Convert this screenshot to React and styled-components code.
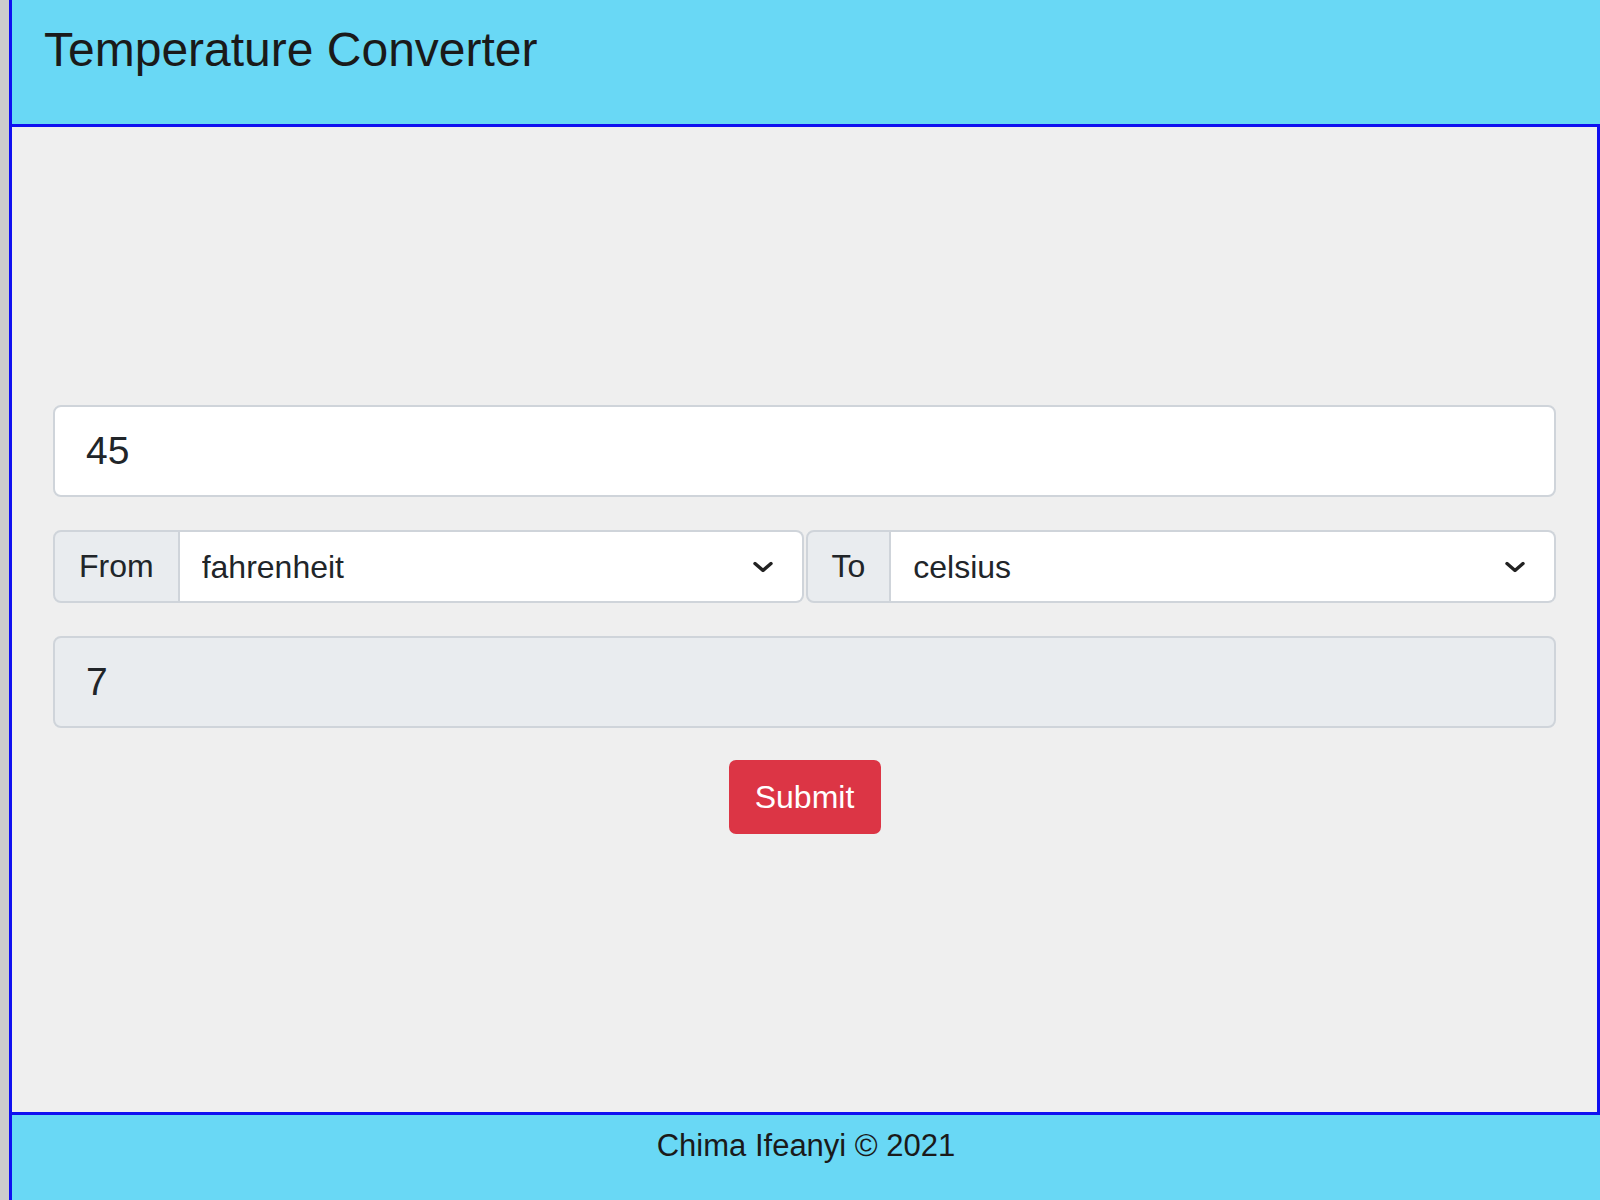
import styled, { createGlobalStyle } from 'styled-components';

const GlobalStyle = createGlobalStyle`
    html, body {
        margin: 0;
        padding: 0;
        background: #cdcdcd;
    }

    #root {
        padding-left: 9px;
    }
`

const Chevron = () => (
    <ChevronIcon viewBox="0 0 20 11" width="20" height="11">
        <polyline points="2,2 10,9 18,2" fill="none" stroke="#222" strokeWidth="3.4" strokeLinecap="round" strokeLinejoin="round" />
    </ChevronIcon>
);

const UnitSelect = ({ label, value, options }) => (
    <InputGroup>
        <GroupLabel>{label}</GroupLabel>
        <SelectBox>
            <Select defaultValue={value}>
                {options.map((o) => <option key={o} value={o}>{o}</option>)}
            </Select>
            <Chevron />
        </SelectBox>
    </InputGroup>
);

const App = () => {
    const units = ['celsius', 'fahrenheit', 'kelvin'];

    return (
        <>
            <GlobalStyle />
            <Page>
                <Header>
                    <Title>Temperature Converter</Title>
                </Header>
                <Main>
                    <Form onSubmit={(e) => e.preventDefault()}>
                        <TextInput type="text" defaultValue="45" />
                        <SelectRow>
                            <UnitSelect label="From" value="fahrenheit" options={units} />
                            <UnitSelect label="To" value="celsius" options={units} />
                        </SelectRow>
                        <TextInput type="text" value="7" readOnly $readonly />
                        <SubmitButton type="submit">Submit</SubmitButton>
                    </Form>
                </Main>
                <Footer>Chima Ifeanyi © 2021</Footer>
            </Page>
        </>
    );
}

const Page = styled.div`
    display: flex;
    flex-direction: column;
    height: 1200px;
    border-left: 3px solid #1010f0;
    font-family: "Liberation Sans", Arial, sans-serif;
    color: #212529;
`

const Header = styled.header`
    height: 103px;
    padding: 21px 0 0 32px;
    background: #69d8f5;
    border-bottom: 3px solid #1010f0;
`

const Title = styled.h1`
    margin: 0;
    font-size: 48px;
    font-weight: 400;
    line-height: 1.2;
    color: #1a1a1a;
`

const Main = styled.main`
    flex: 1;
    display: flex;
    flex-direction: column;
    justify-content: center;
    padding: 0 41px;
    background: #efefef;
    border-right: 3px solid #1010f0;
`

const Form = styled.form`
    display: flex;
    flex-direction: column;
    gap: 33px;
`

const TextInput = styled.input`
    box-sizing: border-box;
    height: 92px;
    width: 100%;
    padding: 0 31px;
    font-family: inherit;
    font-size: 39px;
    color: #212529;
    background: ${(props) => props.$readonly ? '#e9ecef' : '#fff'};
    border: 2px solid #cfd4da;
    border-radius: 8px;
    outline: none;
`

const SelectRow = styled.div`
    display: grid;
    grid-template-columns: 1fr 1fr;
    gap: 2px;
`

const InputGroup = styled.div`
    display: flex;
    height: 73px;
`

const GroupLabel = styled.span`
    display: flex;
    align-items: center;
    padding: 0 24px;
    font-size: 32px;
    background: #e9ecef;
    border: 2px solid #cfd4da;
    border-radius: 8px 0 0 8px;
`

const SelectBox = styled.div`
    position: relative;
    flex: 1;
    display: flex;
`

const Select = styled.select`
    flex: 1;
    appearance: none;
    padding: 0 22px;
    font-family: "Liberation Sans", Arial, sans-serif;
    font-size: 32px;
    color: #212529;
    background: #fff;
    border: 2px solid #cfd4da;
    border-left: none;
    border-radius: 0 8px 8px 0;
    outline: none;
`

const ChevronIcon = styled.svg`
    position: absolute;
    right: 31px;
    top: 50%;
    transform: translateY(-50%);
    pointer-events: none;
`

const SubmitButton = styled.button`
    align-self: center;
    width: 152px;
    height: 74px;
    margin-top: -1px;
    font-family: "Liberation Sans", Arial, sans-serif;
    font-size: 32px;
    color: #fff;
    background: #dc3545;
    border: 2px solid #dc3545;
    border-radius: 7px;
    cursor: pointer;
`

const Footer = styled.footer`
    height: 77px;
    padding-top: 8px;
    text-align: center;
    font-size: 31px;
    line-height: 1.5;
    background: #69d8f5;
    border-top: 3px solid #1010f0;
    color: #1a1a1a;
`

export default App;
